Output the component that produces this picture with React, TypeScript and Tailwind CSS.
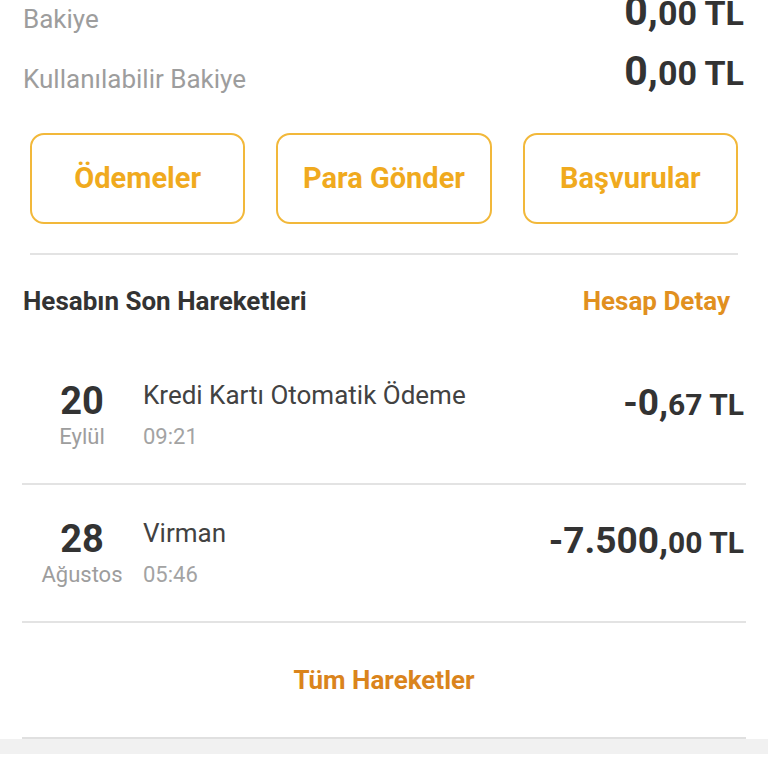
import React from "react"

type Tx = { day: string; month: string; title: string; time: string; int: string; dec: string }

const txs: Tx[] = [
  { day: "20", month: "Eylül", title: "Kredi Kartı Otomatik Ödeme", time: "09:21", int: "-0,", dec: "67 TL" },
  { day: "28", month: "Ağustos", title: "Virman", time: "05:46", int: "-7.500,", dec: "00 TL" },
]

function Amount({ int, dec }: { int: string; dec: string }) {
  return (
    <div className="text-[37px] font-bold leading-[44px] text-[#333333] whitespace-nowrap">
      <span className="leading-none">{int}</span>
      <span className="text-[30px] leading-none">{dec}</span>
    </div>
  )
}

function BalanceRow({ label, int, dec }: { label: string; int: string; dec: string }) {
  return (
    <div className="flex h-[60px] items-baseline justify-between pl-[23px] pr-[24px]">
      <span className="translate-y-[3px] text-[26px] leading-[60px] text-[#9d9d9d]">{label}</span>
      <div className="text-[41px] font-bold leading-[60px] text-[#333333] whitespace-nowrap">
        <span className="leading-none">{int}</span>
        <span className="text-[34px] leading-none">{dec}</span>
      </div>
    </div>
  )
}

function ActionButton({ label }: { label: string }) {
  return (
    <button className="flex h-[91px] items-center justify-center rounded-[14px] border-2 border-[#f2b83a] bg-white text-[29px] font-bold text-[#f0aa1e]">
      {label}
    </button>
  )
}

function TxRow({ tx }: { tx: Tx }) {
  return (
    <>
      <div className="flex h-[136px] pl-[21px] pr-[24px]">
        <div className="flex w-[122px] flex-col items-center pt-[36px]">
          <span className="text-[38px] font-bold leading-[36px] text-[#333333]">{tx.day}</span>
          <span className="text-[22px] leading-[36px] text-[#9d9d9d]">{tx.month}</span>
        </div>
        <div className="flex flex-1 flex-col pt-[33px]">
          <span className="text-[26px] leading-[30px] text-[#424242]">{tx.title}</span>
          <span className="mt-[13px] text-[22px] leading-[28px] text-[#a3a3a3]">{tx.time}</span>
        </div>
        <div className="pt-[34px]">
          <Amount int={tx.int} dec={tx.dec} />
        </div>
      </div>
      <div className="mx-[22px] h-[2px] bg-[#e3e3e3]" />
    </>
  )
}

export default function App() {
  return (
    <div className="h-[768px] w-[768px] overflow-hidden bg-white font-['Roboto',sans-serif]">
      <div className="-mt-[19px]">
        <BalanceRow label="Bakiye" int="0," dec="00 TL" />
        <BalanceRow label="Kullanılabilir Bakiye" int="0," dec="00 TL" />
      </div>

      <div className="mt-[32px] grid grid-cols-3 gap-[31px] px-[30px]">
        <ActionButton label="Ödemeler" />
        <ActionButton label="Para Gönder" />
        <ActionButton label="Başvurular" />
      </div>

      <div className="mx-[30px] mt-[29px] h-[2px] bg-[#e3e3e3]" />

      <div className="flex h-[92px] items-center justify-between pl-[23px] pr-[38px]">
        <span className="text-[26px] font-bold text-[#333333]">Hesabın Son Hareketleri</span>
        <span className="text-[26px] font-bold text-[#e1901f]">Hesap Detay</span>
      </div>

      {txs.map((tx) => (
        <TxRow key={tx.day} tx={tx} />
      ))}

      <div className="flex h-[114px] items-center justify-center">
        <span className="text-[26px] font-bold text-[#da841c]">Tüm Hareketler</span>
      </div>
      <div className="mx-[22px] h-[2px] bg-[#e0e0e0]" />
      <div className="h-[15px] bg-[#f1f1f1]" />
    </div>
  )
}
